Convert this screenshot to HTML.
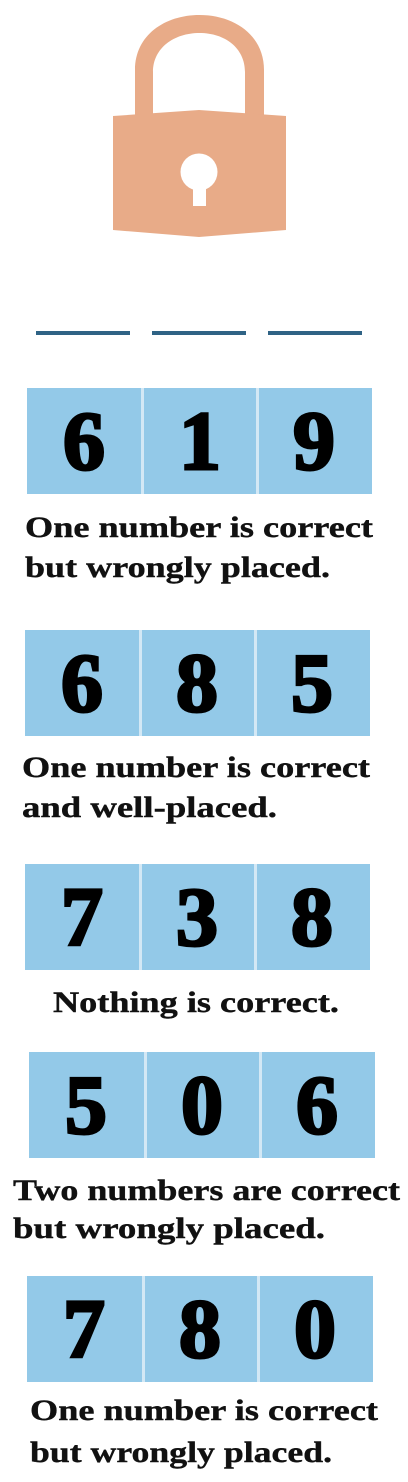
<!DOCTYPE html>
<html><head><meta charset="utf-8"><style>
html,body{margin:0;padding:0;background:#fff;}
svg{display:block;}
.d{font-family:"Liberation Serif",serif;font-weight:bold;font-size:84px;fill:#000;stroke:#000;stroke-width:3;text-anchor:middle;}
.t{font-family:"Liberation Serif",serif;font-weight:bold;font-size:30px;fill:#111;stroke:#111;stroke-width:0.4;}
</style></head><body>
<svg width="408" height="1482" viewBox="0 0 408 1482" xmlns="http://www.w3.org/2000/svg">
<g fill="#e8ab88">
<path d="M135 118 V70 C135 35 165 15 199.5 15 C234 15 264 35 264 70 V118 H245 V72 C245 48 225 33 199.5 33 C174 33 153 48 153 72 V118 Z"/>
<path d="M113 116 L199 110 L286 116 V230 L199 237 L113 230 Z"/>
</g>
<circle cx="199" cy="172" r="18.5" fill="#fff"/>
<rect x="193" y="176" width="13" height="30" fill="#fff"/>
<g fill="#2f6385">
<rect x="36" y="331" width="94" height="4"/>
<rect x="152" y="331" width="94" height="4"/>
<rect x="268" y="331" width="94" height="4"/>
</g>
<g fill="#93c9e8">
<rect x="27" y="388" width="345" height="106"/>
<rect x="25" y="630" width="345" height="106"/>
<rect x="25" y="864" width="345" height="106"/>
<rect x="29" y="1052" width="346" height="106"/>
<rect x="27" y="1276" width="346" height="106"/>
</g>
<g fill="#d3e8f5">
<rect x="141" y="388" width="3" height="106"/><rect x="256" y="388" width="3" height="106"/>
<rect x="139" y="630" width="3" height="106"/><rect x="254" y="630" width="3" height="106"/>
<rect x="139" y="864" width="3" height="106"/><rect x="254" y="864" width="3" height="106"/>
<rect x="144" y="1052" width="3" height="106"/><rect x="259" y="1052" width="3" height="106"/>
<rect x="142" y="1276" width="3" height="106"/><rect x="257" y="1276" width="3" height="106"/>
</g>
<g class="d">
<text x="84" y="469">6</text><text x="200" y="469">1</text><text x="314" y="469">9</text>
<text x="82" y="711">6</text><text x="197" y="711">8</text><text x="312" y="711">5</text>
<text x="82" y="945">7</text><text x="197" y="945">3</text><text x="312" y="945">8</text>
<text x="86" y="1133">5</text><text x="202" y="1133">0</text><text x="317" y="1133">6</text>
<text x="84" y="1357">7</text><text x="200" y="1357">8</text><text x="315" y="1357">0</text>
</g>
<g class="t">
<text x="25" y="537" textLength="348" lengthAdjust="spacingAndGlyphs">One number is correct</text>
<text x="25" y="577" textLength="305" lengthAdjust="spacingAndGlyphs">but wrongly placed.</text>
<text x="22" y="777" textLength="348" lengthAdjust="spacingAndGlyphs">One number is correct</text>
<text x="22" y="817" textLength="255" lengthAdjust="spacingAndGlyphs">and well-placed.</text>
<text x="53" y="1012" textLength="286" lengthAdjust="spacingAndGlyphs">Nothing is correct.</text>
<text x="13" y="1200" textLength="387" lengthAdjust="spacingAndGlyphs">Two numbers are correct</text>
<text x="13" y="1238" textLength="312" lengthAdjust="spacingAndGlyphs">but wrongly placed.</text>
<text x="30" y="1420" textLength="348" lengthAdjust="spacingAndGlyphs">One number is correct</text>
<text x="30" y="1462" textLength="302" lengthAdjust="spacingAndGlyphs">but wrongly placed.</text>
</g>
</svg>
</body></html>
